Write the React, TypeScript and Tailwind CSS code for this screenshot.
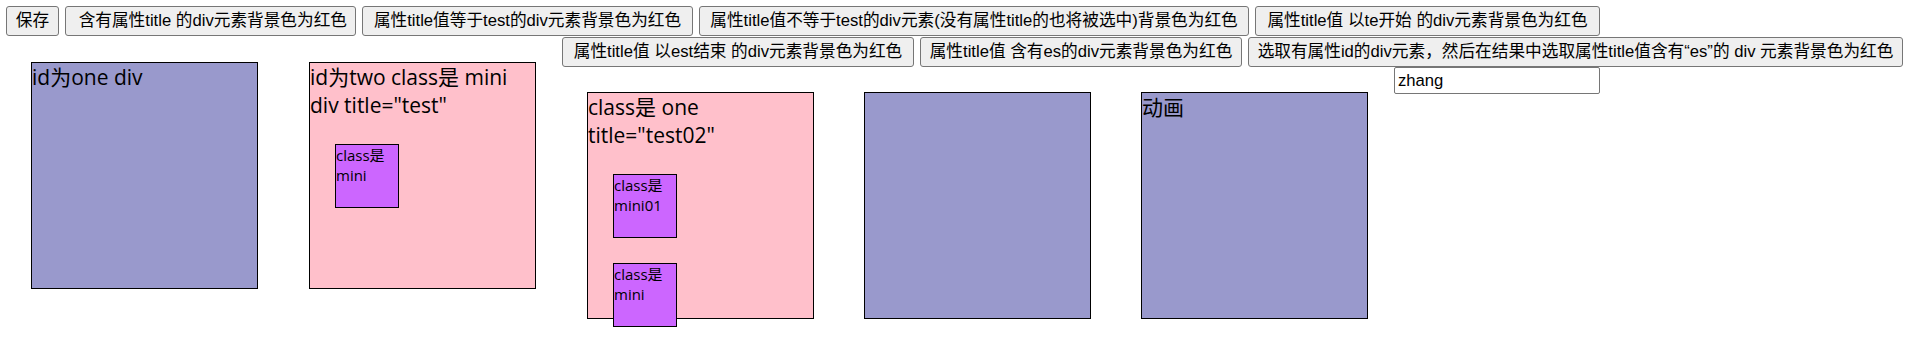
const rowOne = [
  { label: "保存", w: "w-[53px]" },
  { label: " 含有属性title 的div元素背景色为红色", w: "w-[291px]" },
  { label: "属性title值等于test的div元素背景色为红色", w: "w-[331px]" },
  { label: "属性title值不等于test的div元素(没有属性title的也将被选中)背景色为红色", w: "w-[550px]" },
  { label: "属性title值 以te开始 的div元素背景色为红色", w: "w-[345px]" },
];

const rowTwo = [
  { label: "属性title值 以est结束 的div元素背景色为红色", w: "w-[352px]" },
  { label: "属性title值 含有es的div元素背景色为红色", w: "w-[322px]" },
  { label: "选取有属性id的div元素，然后在结果中选取属性title值含有“es”的 div 元素背景色为红色", w: "w-[655px]" },
];

function Btn({ label, w }: { label: string; w: string }) {
  return (
    <button
      className={`${w} h-[30px] shrink-0 whitespace-pre rounded-[3px] border border-[#767676] bg-[#efefef] text-center text-[16.67px] leading-none text-black`}
    >
      {label}
    </button>
  );
}

function Mini({ children }: { children: React.ReactNode }) {
  return (
    <div className="ml-[25px] mt-[25px] h-[64px] w-[64px] border border-black bg-[#cc66ff] text-[15px] leading-[20px]">
      {children}
    </div>
  );
}

function Box({ pink, children }: { pink?: boolean; children?: React.ReactNode }) {
  return (
    <div
      className={`h-[227px] w-[227px] shrink-0 overflow-visible border border-black ${pink ? "bg-[#ffc0cb]" : "bg-[#9999cc]"}`}
    >
      {children}
    </div>
  );
}

export default function App() {
  return (
    <div className="h-[337px] w-[1912px] overflow-hidden bg-white font-['Liberation_Sans','Noto_Sans_CJK_SC',sans-serif] text-black">
      <div className="flex gap-[6px] pl-[6px] pt-[6px]">
        {rowOne.map((b) => (
          <Btn key={b.label} {...b} />
        ))}
      </div>

      <div className="flex items-start">
        <div className="mt-[26px] flex gap-[51px] pl-[31px] font-['Open_Sans','Noto_Sans_CJK_SC',sans-serif] text-[21px] leading-[28px]">
          <Box>id为one div</Box>
          <Box pink>
            id为two class是 mini div title="test"
            <Mini>class是 mini</Mini>
          </Box>
        </div>

        <div className="ml-[26px] mt-[1px] flex flex-col">
          <div className="flex gap-[6px]">
            {rowTwo.map((b) => (
              <Btn key={b.label} {...b} />
            ))}
          </div>
          <div className="mt-[0px] flex items-start">
            <div className="mt-[25px] flex gap-[50px] pl-[25px] font-['Open_Sans','Noto_Sans_CJK_SC',sans-serif] text-[21px] leading-[28px]">
              <Box pink>
                class是 one title="test02"
                <Mini>class是 mini01</Mini>
                <Mini>class是 mini</Mini>
              </Box>
              <Box />
              <Box>动画</Box>
            </div>
            <input
              defaultValue="zhang"
              className="ml-[26px] h-[27px] w-[206px] rounded-[2px] border border-[#767676] px-[3px] text-[16.67px] text-black outline-none"
            />
          </div>
        </div>
      </div>
    </div>
  );
}
